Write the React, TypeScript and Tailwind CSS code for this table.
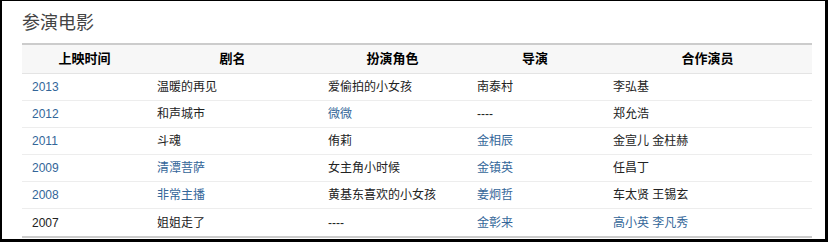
type Cell = { text: string; link?: boolean };

const columns = ["上映时间", "剧名", "扮演角色", "导演", "合作演员"];

const rows: Cell[][] = [
  [
    { text: "2013", link: true },
    { text: "温暖的再见" },
    { text: "爱偷拍的小女孩" },
    { text: "南泰村" },
    { text: "李弘基" },
  ],
  [
    { text: "2012", link: true },
    { text: "和声城市" },
    { text: "微微", link: true },
    { text: "----" },
    { text: "郑允浩" },
  ],
  [
    { text: "2011", link: true },
    { text: "斗魂" },
    { text: "侑莉" },
    { text: "金相辰", link: true },
    { text: "金宣儿 金柱赫" },
  ],
  [
    { text: "2009", link: true },
    { text: "清潭菩萨", link: true },
    { text: "女主角小时候" },
    { text: "金镇英", link: true },
    { text: "任昌丁" },
  ],
  [
    { text: "2008", link: true },
    { text: "非常主播", link: true },
    { text: "黄基东喜欢的小女孩" },
    { text: "姜炯哲", link: true },
    { text: "车太贤 王锡玄" },
  ],
  [
    { text: "2007" },
    { text: "姐姐走了" },
    { text: "----" },
    { text: "金彰来", link: true },
    { text: "高小英 李凡秀", link: true },
  ],
];

const grid = "grid grid-cols-[125px_171px_149px_136px_209px]";

export default function App() {
  return (
    <div
      className="w-[828px] h-[242px] bg-white border-black border-l-2 border-t border-r-[3px] border-b-[3px] pl-5 pt-[10px] overflow-hidden"
      style={{ fontFamily: '"Liberation Sans", "Noto Sans CJK SC", sans-serif' }}
    >
      <h2 className="text-[18px] leading-6 text-[#444] mb-2">参演电影</h2>

      <div className="w-[790px] border-t-2 border-[#cccccc] border-b-2">
        {/* header */}
        <div className={`${grid} h-[29px] bg-[#f7f7f7] border-b border-[#e4e4e4]`}>
          {columns.map((c) => (
            <div
              key={c}
              className="flex items-center justify-center text-[13px] font-bold text-black"
            >
              {c}
            </div>
          ))}
        </div>

        {/* body */}
        {rows.map((row, i) => (
          <div
            key={i}
            className={`${grid} h-[27px] ${
              i < rows.length - 1 ? "border-b border-[#ededed]" : ""
            }`}
          >
            {row.map((cell, j) => (
              <div
                key={j}
                className={`flex items-center pl-[10px] text-[12px] ${
                  cell.link ? "text-[#336699]" : "text-[#222]"
                }`}
              >
                {cell.text}
              </div>
            ))}
          </div>
        ))}
      </div>
    </div>
  );
}
